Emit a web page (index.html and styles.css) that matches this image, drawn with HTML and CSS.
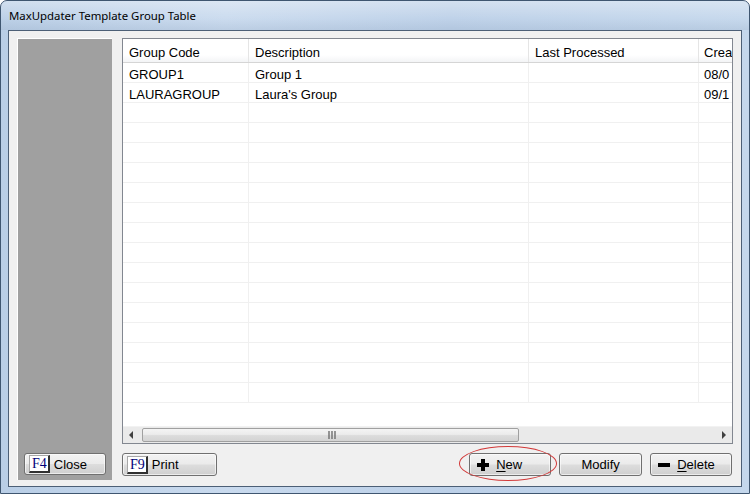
FILE: index.html
```html
<!DOCTYPE html>
<html>
<head>
<meta charset="utf-8">
<link rel="stylesheet" href="styles.css">
</head>
<body>
<div class="window">
  <div class="titlebar">MaxUpdater Template Group Table</div>
  <div class="client">
    <div class="side">
      <button class="btn btn-close"><span class="key">F4</span>Close</button>
    </div>
    <div class="main">
      <div class="grid">
        <div class="table">
          <div class="row head">
            <div class="cell c1">Group Code</div>
            <div class="cell c2">Description</div>
            <div class="cell c3">Last Processed</div>
            <div class="cell c4">Crea</div>
          </div>
          <div class="row">
            <div class="cell c1">GROUP1</div>
            <div class="cell c2">Group 1</div>
            <div class="cell c3"></div>
            <div class="cell c4">08/0</div>
          </div>
          <div class="row">
            <div class="cell c1">LAURAGROUP</div>
            <div class="cell c2">Laura's Group</div>
            <div class="cell c3"></div>
            <div class="cell c4">09/1</div>
          </div>
          <div class="row"><div class="cell c1"></div><div class="cell c2"></div><div class="cell c3"></div><div class="cell c4"></div></div>
          <div class="row"><div class="cell c1"></div><div class="cell c2"></div><div class="cell c3"></div><div class="cell c4"></div></div>
          <div class="row"><div class="cell c1"></div><div class="cell c2"></div><div class="cell c3"></div><div class="cell c4"></div></div>
          <div class="row"><div class="cell c1"></div><div class="cell c2"></div><div class="cell c3"></div><div class="cell c4"></div></div>
          <div class="row"><div class="cell c1"></div><div class="cell c2"></div><div class="cell c3"></div><div class="cell c4"></div></div>
          <div class="row"><div class="cell c1"></div><div class="cell c2"></div><div class="cell c3"></div><div class="cell c4"></div></div>
          <div class="row"><div class="cell c1"></div><div class="cell c2"></div><div class="cell c3"></div><div class="cell c4"></div></div>
          <div class="row"><div class="cell c1"></div><div class="cell c2"></div><div class="cell c3"></div><div class="cell c4"></div></div>
          <div class="row"><div class="cell c1"></div><div class="cell c2"></div><div class="cell c3"></div><div class="cell c4"></div></div>
          <div class="row"><div class="cell c1"></div><div class="cell c2"></div><div class="cell c3"></div><div class="cell c4"></div></div>
          <div class="row"><div class="cell c1"></div><div class="cell c2"></div><div class="cell c3"></div><div class="cell c4"></div></div>
          <div class="row"><div class="cell c1"></div><div class="cell c2"></div><div class="cell c3"></div><div class="cell c4"></div></div>
          <div class="row"><div class="cell c1"></div><div class="cell c2"></div><div class="cell c3"></div><div class="cell c4"></div></div>
          <div class="row"><div class="cell c1"></div><div class="cell c2"></div><div class="cell c3"></div><div class="cell c4"></div></div>
          <div class="row"><div class="cell c1"></div><div class="cell c2"></div><div class="cell c3"></div><div class="cell c4"></div></div>
        </div>
        <div class="hscroll">
          <div class="arrow">
            <svg width="5" height="8" viewBox="0 0 5 8"><path d="M4 0 L0 4 L4 8 Z" fill="#404040"/></svg>
          </div>
          <div class="track">
            <div class="thumb">
              <svg width="9" height="8" viewBox="0 0 9 8"><path d="M1 0v8M4 0v8M7 0v8" stroke="#6e6e6e" stroke-width="1.4"/></svg>
            </div>
          </div>
          <div class="arrow">
            <svg width="5" height="8" viewBox="0 0 5 8"><path d="M1 0 L5 4 L1 8 Z" fill="#404040"/></svg>
          </div>
        </div>
      </div>
      <div class="buttons">
        <button class="btn btn-print"><span class="key">F9</span>Print</button>
        <div class="spacer"></div>
        <div class="new-wrap">
          <button class="btn btn-action">
            <svg width="12" height="12" viewBox="0 0 12 12"><path d="M4 0h4v4h4v4h-4v4h-4v-4h-4v-4h4z" fill="#000"/></svg>
            <span><u>N</u>ew</span>
          </button>
          <div class="highlight"></div>
        </div>
        <button class="btn btn-action btn-modify">Modify</button>
        <button class="btn btn-action">
          <svg width="12" height="4" viewBox="0 0 12 4"><rect width="12" height="4" fill="#000"/></svg>
          <span><u>D</u>elete</span>
        </button>
      </div>
    </div>
  </div>
</div>
</body>
</html>
```

FILE: styles.css
```css
* { box-sizing: border-box; }
html, body { margin: 0; padding: 0; }
body { width: 750px; height: 494px; overflow: hidden; background: #fff; }

.window {
  width: 750px;
  height: 494px;
  display: flex;
  flex-direction: column;
  background: linear-gradient(90deg, #b9cee6 0%, #c9daee 30%, #bcd0e8 60%, #c4d7ec 100%);
  border: 1px solid #3f5670;
  border-radius: 7px 7px 0 0;
}

.titlebar {
  height: 29px;
  flex: none;
  padding: 7px 0 0 8px;
  font: 11.4px "Noto Sans", "Open Sans", sans-serif;
  color: #000;
  background: linear-gradient(180deg, rgba(255,255,255,0.35) 0%, rgba(255,255,255,0.05) 60%, rgba(150,170,195,0.25) 100%);
  border-radius: 6px 6px 0 0;
}

.client {
  flex: 1;
  margin: 0 7px 6px 7px;
  background: #f0f0f0;
  border: 1px solid #4c5f76;
  display: flex;
  padding: 7px 11px 6px 8px;
  gap: 10px;
}

.side {
  width: 95px;
  flex: none;
  background: #a0a0a0;
  border-top: 1px solid #fff;
  border-left: 1px solid #fff;
  display: flex;
  flex-direction: column;
  justify-content: flex-end;
  padding: 0 6px 5px 6px;
}

.main {
  flex: 1;
  display: flex;
  flex-direction: column;
}

.grid {
  height: 406px;
  border: 1px solid #828790;
  background: #fff;
  display: flex;
  flex-direction: column;
  overflow: hidden;
}

.table {
  flex: 1;
  overflow: hidden;
  font: 13px "Liberation Sans", Arial, sans-serif;
  color: #000;
}

.row {
  display: flex;
  height: 20px;
  border-bottom: 1px solid #f0f0f0;
}
.row.head {
  height: 24px;
  border-bottom: 1px solid #d5d5d5;
  background: linear-gradient(180deg, #ffffff 0%, #ffffff 70%, #f3f4f6 100%);
}

.cell {
  flex: none;
  padding: 4px 0 0 6px;
  white-space: nowrap;
  overflow: hidden;
  border-right: 1px solid #f0f0f0;
  line-height: 15px;
}
.head .cell { padding-top: 6px; border-right-color: #e5e5e5; }
.c1 { width: 126px; }
.c2 { width: 280px; }
.c3 { width: 170px; }
.c4 { flex: 1; border-right: none; padding-left: 5px; }

.hscroll {
  height: 17px;
  flex: none;
  display: flex;
  background: #eaeaea;
  border-top: 1px solid #f2f2f2;
}
.arrow {
  width: 17px;
  display: flex;
  align-items: center;
  justify-content: center;
}
.track {
  flex: 1;
  display: flex;
  padding: 1px 0;
}
.thumb {
  width: 377px;
  margin-left: 2px;
  border: 1px solid #a0a0a0;
  border-radius: 2px;
  background: linear-gradient(180deg, #f4f4f4 0%, #ececec 45%, #dcdcdc 55%, #d4d4d4 100%);
  display: flex;
  align-items: center;
  justify-content: center;
  padding-left: 4px;
}

.buttons {
  display: flex;
  margin-top: 9px;
  gap: 8px;
  padding-right: 1px;
}
.spacer { flex: 1; }

.btn {
  height: 23px;
  border: 1px solid #707070;
  border-radius: 3px;
  background: linear-gradient(180deg, #f2f2f2 0%, #ebebeb 48%, #dddddd 52%, #cfcfcf 100%);
  box-shadow: inset 0 0 0 1px rgba(255,255,255,0.6);
  font: 13px "Liberation Sans", Arial, sans-serif;
  color: #000;
  display: flex;
  align-items: center;
  padding: 0;
  margin: 0;
}

.key {
  font: 14px "Liberation Serif", "Times New Roman", serif;
  color: #00007a;
  background: #fff;
  border: 1px solid #a8a8a8;
  border-right: 2px solid #303030;
  border-bottom: 2px solid #303030;
  height: 18px;
  padding: 0 1px 0 2px;
  line-height: 15px;
  margin: 0 4px 0 4px;
}

.btn-close { width: 82px; height: 22px; }
.btn-print { width: 95px; }

.new-wrap { position: relative; }
.btn-action {
  width: 82px;
  justify-content: flex-start;
  padding-left: 7px;
  gap: 7px;
}
.btn-modify { width: 83px; justify-content: center; padding-left: 0; }
.btn-action u { text-decoration: underline; text-underline-offset: 2px; }

.highlight {
  position: absolute;
  left: -10px;
  top: -7px;
  width: 98px;
  height: 35px;
  border: 1px solid #d23a3a;
  border-radius: 50%;
  pointer-events: none;
}
```
